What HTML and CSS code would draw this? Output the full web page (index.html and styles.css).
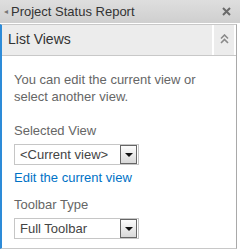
FILE: index.html
```
<!DOCTYPE html>
<html lang="en">
<head>
    <meta charset="UTF-8">
    <title>Project Status Report - Tool Pane</title>
    <link rel="stylesheet" href="styles.css">
</head>
<body>
    <div class="tool-pane">
        <!-- pane title bar -->
        <div class="pane-header">
            <span class="pane-arrow">&#9666;</span>
            <span class="pane-title">Project Status Report</span>
            <svg class="pane-close" width="9" height="9" viewBox="0 0 9 9">
                <path d="M1 1 L8 8 M8 1 L1 8" stroke="#6a6a6a" stroke-width="2"/>
            </svg>
        </div>

        <div class="pane-body">
            <!-- collapsible section -->
            <div class="section-head">
                <div class="section-title">List Views</div>
                <div class="section-toggle">
                    <svg width="9" height="10" viewBox="0 0 9 10">
                        <path d="M1 4.5 L4.5 1 L8 4.5 M1 9 L4.5 5.5 L8 9" fill="none" stroke="#8a8a8a" stroke-width="1.6"/>
                    </svg>
                </div>
            </div>

            <div class="section-content">
                <p class="help-text">You can edit the current view or select another view.</p>

                <div class="field-label">Selected View</div>
                <div class="select-box">
                    <span class="select-value">&lt;Current view&gt;</span>
                    <span class="select-btn"><i class="select-arrow"></i></span>
                </div>
                <a class="edit-link" href="#">Edit the current view</a>

                <div class="field-label">Toolbar Type</div>
                <div class="select-box">
                    <span class="select-value">Full Toolbar</span>
                    <span class="select-btn"><i class="select-arrow"></i></span>
                </div>
            </div>
        </div>
    </div>
</body>
</html>
```

FILE: styles.css
```
* {
    margin: 0;
    padding: 0;
    box-sizing: border-box;
}

body {
    font-family: 'Liberation Sans', Arial, sans-serif;
    background: #fff;
    width: 240px;
    height: 250px;
    overflow: hidden;
}

/* title bar */
.pane-header {
    height: 24px;
    display: flex;
    align-items: center;
    padding: 0 9px 0 4px;
    background: linear-gradient(#dedede, #cfcfcf);
    border-bottom: 1px solid #fff;
}

.pane-arrow {
    color: #777;
    font-size: 8px;
    margin-right: 3px;
}

.pane-title {
    flex: 1;
    color: #333;
    font-size: 13px;
}

/* body with blue left edge */
.pane-body {
    width: 237px;
    height: 225px;
    border-top: 1px solid #c8c8c8;
    border-left: 2px solid #2d8bd8;
    border-right: 1px solid #a9a9a9;
    border-bottom: 1px solid #c8c8c8;
}

.section-head {
    display: flex;
    gap: 2px;
    height: 31px;
    padding-right: 2px;
    border-bottom: 1px solid #c8c8c8;
}

.section-title {
    flex: 1;
    background: #ececec;
    color: #333;
    font-size: 14px;
    padding: 6px 6px 0;
}

.section-toggle {
    width: 20px;
    background: #ececec;
    display: flex;
    justify-content: center;
    padding-top: 9px;
}

.section-content {
    padding: 15px 12px 0;
    color: #666;
    font-size: 13px;
}

.help-text {
    line-height: 17px;
    margin-bottom: 17px;
}

.field-label {
    line-height: 17px;
    margin-bottom: 5px;
}

.select-box {
    width: 125px;
    height: 21px;
    display: flex;
    align-items: center;
    border: 1px solid #c6c6c6;
    padding-left: 5px;
}

.select-value {
    flex: 1;
    color: #444;
}

.select-btn {
    width: 17px;
    height: 19px;
    margin-right: 1px;
    border: 1px solid #666;
    background: linear-gradient(#fdfdfd, #d8d8d8);
    display: flex;
    align-items: center;
    justify-content: center;
}

.select-arrow {
    width: 0;
    height: 0;
    border-left: 4px solid transparent;
    border-right: 4px solid transparent;
    border-top: 4px solid #111;
}

.edit-link {
    display: block;
    color: #0072c6;
    text-decoration: none;
    line-height: 17px;
    margin: 4px 0 10px;
}
```
